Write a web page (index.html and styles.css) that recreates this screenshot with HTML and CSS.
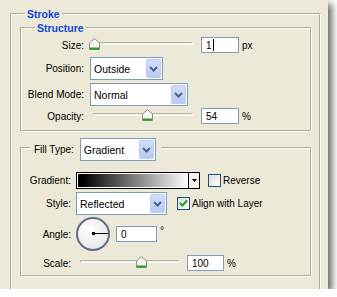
FILE: index.html
```html
<!DOCTYPE html>
<html>
<head>
<meta charset="utf-8">
<link rel="stylesheet" href="styles.css">
</head>
<body>
<div class="panel">
  <fieldset class="group outer">
    <legend class="title">Stroke</legend>
    <div class="outer-body">
      <fieldset class="group structure">
        <legend class="title">Structure</legend>
        <div class="s-body">
          <div class="row row-size">
            <span class="lbl s-lbl">Size:</span>
            <div class="slider">
              <span class="track"></span>
              <svg class="thumb" style="left:-1px" width="11" height="12" viewBox="0 0 11 12"><polygon points="0.5,5 5.5,0.5 10.5,5 10.5,11.5 0.5,11.5" fill="#f7f7f4" stroke="#8c8c80"/><rect x="1" y="9.5" width="9" height="2" fill="#21a121"/></svg>
            </div>
            <span class="field w38"><span>1</span><span class="caret"></span></span>
            <span class="unit">px</span>
          </div>
          <div class="row row-pos">
            <span class="lbl s-lbl">Position:</span>
            <span class="select w73"><span class="sel-text">Outside</span><span class="sel-btn"><svg width="15" height="19" viewBox="0 0 15 19"><polyline points="4,8 7.5,11.5 11,8" fill="none" stroke="#4d6185" stroke-width="2"/></svg></span></span>
          </div>
          <div class="row row-blend">
            <span class="lbl s-lbl">Blend Mode:</span>
            <span class="select w98"><span class="sel-text">Normal</span><span class="sel-btn"><svg width="15" height="19" viewBox="0 0 15 19"><polyline points="4,8 7.5,11.5 11,8" fill="none" stroke="#4d6185" stroke-width="2"/></svg></span></span>
          </div>
          <div class="row row-op">
            <span class="lbl s-lbl">Opacity:</span>
            <div class="slider">
              <span class="track"></span>
              <svg class="thumb" style="left:52px" width="11" height="12" viewBox="0 0 11 12"><polygon points="0.5,5 5.5,0.5 10.5,5 10.5,11.5 0.5,11.5" fill="#f7f7f4" stroke="#8c8c80"/><rect x="1" y="9.5" width="9" height="2" fill="#21a121"/></svg>
            </div>
            <span class="field w38">54</span>
            <span class="unit">%</span>
          </div>
        </div>
      </fieldset>

      <fieldset class="group fill">
        <legend class="fill-legend">
          <span>Fill Type:</span>
          <span class="select w76 legend-select"><span class="sel-text">Gradient</span><span class="sel-btn"><svg width="15" height="19" viewBox="0 0 15 19"><polyline points="4,8 7.5,11.5 11,8" fill="none" stroke="#4d6185" stroke-width="2"/></svg></span></span>
        </legend>
        <div class="f-body">
          <div class="row row-grad">
            <span class="lbl f-lbl">Gradient:</span>
            <span class="grad"><span class="grad-fill"></span><span class="grad-btn"><svg width="9" height="13" viewBox="0 0 9 13"><polygon points="2,5 7,5 4.5,8" fill="#000"/></svg></span></span>
            <span class="check check-top"></span>
            <span class="check-lbl">Reverse</span>
          </div>
          <div class="row row-style">
            <span class="lbl f-lbl">Style:</span>
            <span class="select w91"><span class="sel-text">Reflected</span><span class="sel-btn"><svg width="15" height="19" viewBox="0 0 15 19"><polyline points="4,8 7.5,11.5 11,8" fill="none" stroke="#4d6185" stroke-width="2"/></svg></span></span>
            <span class="check checked"><svg width="11" height="11" viewBox="0 0 11 11"><polyline points="2,5 4.5,7.5 9,2.5" fill="none" stroke="#21a121" stroke-width="2"/></svg></span>
            <span class="check-lbl">Align with Layer</span>
          </div>
          <div class="row row-angle">
            <span class="lbl f-lbl">Angle:</span>
            <span class="dial"><span class="dial-line"></span><span class="dial-dot"></span></span>
            <span class="field w41 angle-field">0</span>
            <span class="deg">°</span>
          </div>
          <div class="row row-scale">
            <span class="lbl f-lbl">Scale:</span>
            <div class="slider scale-slider">
              <span class="track"></span>
              <svg class="thumb" style="left:60px" width="11" height="12" viewBox="0 0 11 12"><polygon points="0.5,5 5.5,0.5 10.5,5 10.5,11.5 0.5,11.5" fill="#f7f7f4" stroke="#8c8c80"/><rect x="1" y="9.5" width="9" height="2" fill="#21a121"/></svg>
            </div>
            <span class="field w37">100</span>
            <span class="unit">%</span>
          </div>
        </div>
      </fieldset>
    </div>
  </fieldset>
</div>
</body>
</html>
```
FILE: styles.css
```css
* { box-sizing: border-box; }
html, body { margin: 0; background: #fff; }
body {
  font-family: "Liberation Sans", Arial, sans-serif;
  font-size: 10px;
  color: #000;
}
.panel {
  width: 328px;
  height: 289px;
  background: #ece9d8;
  overflow: hidden;
  box-shadow: 4px 4px 7px rgba(0, 0, 0, 0.6);
  padding: 8px 0 0 10px;
}
.group {
  margin: 0;
  padding: 0;
  border: 2px groove #fffff4;
  min-width: 0;
}
.title {
  padding: 0 2px;
  margin-left: 13px;
  font-weight: bold;
  font-size: 10.5px;
  line-height: 12px;
  color: #1048d8;
}
.outer { width: 311px; }
.outer-body { padding: 2px 7px 20px 8px; }

.s-body { padding: 2px 0 6px 0; }
.row { display: flex; align-items: center; }
.row-size { height: 16px; margin-top: 1px; }
.row-pos { height: 23px; margin-top: 4px; }
.row-blend { height: 23px; margin-top: 3px; }
.row-op { height: 16px; margin-top: 2px; }

.lbl { text-align: right; flex: none; }
.s-lbl { width: 62px; margin-right: 6px; }
.f-lbl { width: 49px; margin-right: 5px; }

.slider {
  position: relative;
  width: 111px;
  height: 16px;
  flex: none;
}
.track {
  display: block;
  margin: 5px 0 0 3px;
  width: 100px;
  height: 3px;
  border: 1px solid #b3b1a5;
  border-bottom-color: #fff;
  border-right-color: #fff;
  border-radius: 2px;
  background: #f3f2ec;
}
.scale-slider .track { margin-left: 4px; }
.thumb { position: absolute; top: 1px; }

.field {
  display: flex;
  align-items: center;
  height: 16px;
  border: 1px solid #7f9db9;
  background: #fff;
  padding-left: 4px;
  flex: none;
}
.w37 { width: 37px; }
.w38 { width: 38px; }
.w41 { width: 41px; }
.caret {
  display: inline-block;
  width: 1px;
  height: 12px;
  background: #000;
  margin-left: 1px;
}
.unit { margin-left: 3px; }

.select {
  display: flex;
  align-items: center;
  height: 23px;
  border: 1px solid #7f9db9;
  background: #fff;
  flex: none;
}
.w73 { width: 73px; }
.w76 { width: 76px; }
.w91 { width: 91px; }
.w98 { width: 98px; }
.sel-text { flex: 1; padding-left: 3px; font-size: 10.5px; }
.sel-btn {
  display: flex;
  width: 15px;
  height: 19px;
  margin-right: 1px;
  border: 1px solid #bccdf4;
  border-radius: 2px;
  background: linear-gradient(#d3defc, #b7caf7);
}
.sel-btn svg { margin: -1px; }

.fill { margin-top: 3px; }
.fill-legend {
  display: flex;
  align-items: center;
  margin-left: 8px;
  padding: 3px 5px 0 4px;
}
.legend-select { margin-left: 6px; }
.f-body { padding: 11px 0 4px 0; }
.row-grad { height: 17px; }
.row-style { height: 23px; margin-top: 3px; }
.row-angle { height: 34px; margin-top: 2px; }
.row-scale { height: 16px; margin-top: 4px; }

.grad {
  display: flex;
  width: 124px;
  height: 17px;
  border: 1px solid #000;
  flex: none;
}
.grad-fill {
  flex: 1;
  border: 1px solid #fff;
  border-right: 0;
  background: linear-gradient(to right, #000 0%, #000 4%, #fff 100%);
}
.grad-btn {
  width: 11px;
  border-left: 1px solid #000;
  background: #f2f2ee;
  display: flex;
  align-items: center;
  justify-content: center;
}

.check {
  width: 13px;
  height: 13px;
  border: 1px solid #1c5180;
  background: linear-gradient(135deg, #dcdcd7, #fff);
  flex: none;
  display: flex;
  align-items: center;
  justify-content: center;
}
.check-top { margin-left: 8px; }
.checked { margin-left: 10px; }
.check-lbl { margin-left: 2px; }

.dial {
  position: relative;
  width: 34px;
  height: 34px;
  border-radius: 50%;
  border: 2px solid #5d6d8b;
  background: radial-gradient(circle at 40% 35%, #ffffff, #e2e2de);
  flex: none;
}
.dial-line {
  position: absolute;
  left: 15px;
  top: 14px;
  width: 15px;
  height: 1px;
  background: #000;
}
.dial-dot {
  position: absolute;
  left: 14px;
  top: 13px;
  width: 3px;
  height: 3px;
  background: #000;
}
.angle-field { margin-left: 6px; }
.deg { align-self: flex-start; margin-top: 8px; margin-left: 3px; }
```
